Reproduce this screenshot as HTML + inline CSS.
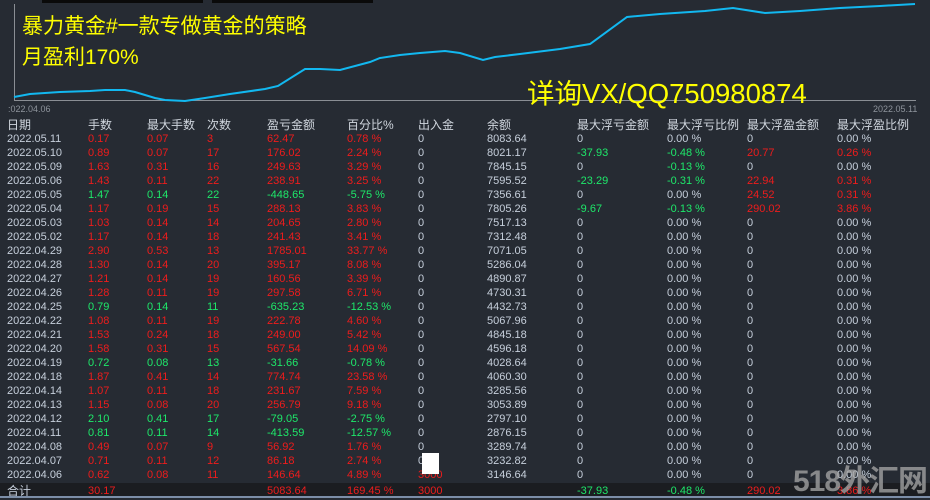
<!DOCTYPE html>
<html><head><meta charset="utf-8"><style>
*{margin:0;padding:0}
body{width:930px;height:498px;background:#262b33;overflow:hidden;position:relative;font-family:"Liberation Sans","Noto Sans CJK SC",sans-serif;}
.r{position:absolute;left:0;width:930px;height:14px;font-size:11px;line-height:14px;color:#c6cfdb}
.r span{position:absolute;white-space:nowrap}
.R{color:#ee1c1c!important}.G{color:#1ee86a!important}
.h{color:#d0d6de}
.c0{left:7px}.c1{left:88px}.c2{left:147px}.c3{left:207px}.c4{left:267px}.c5{left:347px}.c6{left:418px}.c7{left:487px}.c8{left:577px}.c9{left:667px}.c10{left:747px}.c11{left:837px}
.y{position:absolute;color:#ffff00;white-space:nowrap}
</style></head><body>
<div style="position:absolute;left:42px;top:0;width:161px;height:3px;background:#0a0a0a"></div>
<div style="position:absolute;left:212px;top:0;width:161px;height:3px;background:#0a0a0a"></div>
<svg style="position:absolute;left:0;top:0" width="930" height="120">
<line x1="14.5" y1="4" x2="14.5" y2="101" stroke="#8a8e94" stroke-width="1"/>
<line x1="14" y1="100.5" x2="916" y2="100.5" stroke="#8a8e94" stroke-width="1"/>
<polyline fill="none" stroke="#12b8f0" stroke-width="2" points="14,97 30,94 60,92 90,91 105,90 125,90 135,92 155,98 165,100 185,101 205,98 230,94 265,89 278,86 305,69 320,69 340,70 370,62 380,58 400,55 420,53 445,51 460,53 483,60 495,57 520,54 560,49 590,44 627,17 660,14 705,11 733,8 765,13 800,11 840,8 880,6 915,4"/>
<text x="8" y="112" font-size="9" fill="#8e949c" font-family="Liberation Sans">:022.04.06</text>
<text x="873" y="112" font-size="9" fill="#8e949c" font-family="Liberation Sans">2022.05.11</text>
</svg>
<div class="y" style="left:22px;top:10px;font-size:21px">暴力黄金#一款专做黄金的策略</div>
<div class="y" style="left:22px;top:41px;font-size:21px">月盈利170%</div>
<div class="y" style="left:527px;top:71px;font-size:27.5px">详询VX/QQ750980874</div>
<div class="r h" style="top:118px;font-size:12px"><span class="c0">日期</span><span class="c1">手数</span><span class="c2">最大手数</span><span class="c3">次数</span><span class="c4">盈亏金额</span><span class="c5">百分比%</span><span class="c6">出入金</span><span class="c7">余额</span><span class="c8">最大浮亏金额</span><span class="c9">最大浮亏比例</span><span class="c10">最大浮盈金额</span><span class="c11">最大浮盈比例</span></div>
<div id="rows"></div>
<div style="position:absolute;left:0;top:483px;width:930px;height:15px;background:#1b1d21"></div>
<div class="r" style="top:484px;font-size:11px"><span class="c0" style="font-size:12px">合计</span><span class="c1 R">30.17</span><span class="c4 R">5083.64</span><span class="c5 R">169.45 %</span><span class="c6 R">3000</span><span class="c8 G">-37.93</span><span class="c9 G">-0.48 %</span><span class="c10 R">290.02</span><span class="c11 R">3.86 %</span></div>
<div style="position:absolute;left:0;top:496px;width:930px;height:2px;background:#7c8ea8"></div>
<script>
var d=[
["2022.05.11","0.17","0.07","3","62.47","0.78 %","0","8083.64","0","0.00 %","0","0.00 %"],
["2022.05.10","0.89","0.07","17","176.02","2.24 %","0","8021.17","-37.93","-0.48 %","20.77","0.26 %"],
["2022.05.09","1.63","0.31","16","249.63","3.29 %","0","7845.15","0","-0.13 %","0","0.00 %"],
["2022.05.06","1.43","0.11","22","238.91","3.25 %","0","7595.52","-23.29","-0.31 %","22.94","0.31 %"],
["2022.05.05","1.47","0.14","22","-448.65","-5.75 %","0","7356.61","0","0.00 %","24.52","0.31 %"],
["2022.05.04","1.17","0.19","15","288.13","3.83 %","0","7805.26","-9.67","-0.13 %","290.02","3.86 %"],
["2022.05.03","1.03","0.14","14","204.65","2.80 %","0","7517.13","0","0.00 %","0","0.00 %"],
["2022.05.02","1.17","0.14","18","241.43","3.41 %","0","7312.48","0","0.00 %","0","0.00 %"],
["2022.04.29","2.90","0.53","13","1785.01","33.77 %","0","7071.05","0","0.00 %","0","0.00 %"],
["2022.04.28","1.30","0.14","20","395.17","8.08 %","0","5286.04","0","0.00 %","0","0.00 %"],
["2022.04.27","1.21","0.14","19","160.56","3.39 %","0","4890.87","0","0.00 %","0","0.00 %"],
["2022.04.26","1.28","0.11","19","297.58","6.71 %","0","4730.31","0","0.00 %","0","0.00 %"],
["2022.04.25","0.79","0.14","11","-635.23","-12.53 %","0","4432.73","0","0.00 %","0","0.00 %"],
["2022.04.22","1.08","0.11","19","222.78","4.60 %","0","5067.96","0","0.00 %","0","0.00 %"],
["2022.04.21","1.53","0.24","18","249.00","5.42 %","0","4845.18","0","0.00 %","0","0.00 %"],
["2022.04.20","1.58","0.31","15","567.54","14.09 %","0","4596.18","0","0.00 %","0","0.00 %"],
["2022.04.19","0.72","0.08","13","-31.66","-0.78 %","0","4028.64","0","0.00 %","0","0.00 %"],
["2022.04.18","1.87","0.41","14","774.74","23.58 %","0","4060.30","0","0.00 %","0","0.00 %"],
["2022.04.14","1.07","0.11","18","231.67","7.59 %","0","3285.56","0","0.00 %","0","0.00 %"],
["2022.04.13","1.15","0.08","20","256.79","9.18 %","0","3053.89","0","0.00 %","0","0.00 %"],
["2022.04.12","2.10","0.41","17","-79.05","-2.75 %","0","2797.10","0","0.00 %","0","0.00 %"],
["2022.04.11","0.81","0.11","14","-413.59","-12.57 %","0","2876.15","0","0.00 %","0","0.00 %"],
["2022.04.08","0.49","0.07","9","56.92","1.76 %","0","3289.74","0","0.00 %","0","0.00 %"],
["2022.04.07","0.71","0.11","12","86.18","2.74 %","0","3232.82","0","0.00 %","0","0.00 %"],
["2022.04.06","0.62","0.08","11","146.64","4.89 %","3000","3146.64","0","0.00 %","0","0.00 %"]];
var h="";
d.forEach(function(r,i){
 var g=r[4][0]=="-";var c=g?"G":"R";
 h+='<div class="r" style="top:'+(132+i*14)+'px">';
 for(var k=0;k<12;k++){
  var cl="";
  if(k>=1&&k<=5)cl=c;
  if(k==6&&r[6]!="0")cl="R";
  if((k==8||k==9)&&r[k][0]=="-")cl="G";
  if((k==10||k==11)&&r[k]!="0"&&r[k]!="0.00 %")cl="R";
  h+='<span class="c'+k+' '+cl+'">'+r[k]+'</span>';
 }
 h+='</div>';
});
document.getElementById("rows").innerHTML=h;
</script>
<div style="position:absolute;left:422px;top:453px;width:17px;height:21px;background:#fff"></div>
<div style="position:absolute;left:793px;top:456px;font-size:30px;font-weight:bold;color:rgba(170,170,170,0.75);white-space:nowrap;letter-spacing:-1px">518外汇网</div>
</body></html>
